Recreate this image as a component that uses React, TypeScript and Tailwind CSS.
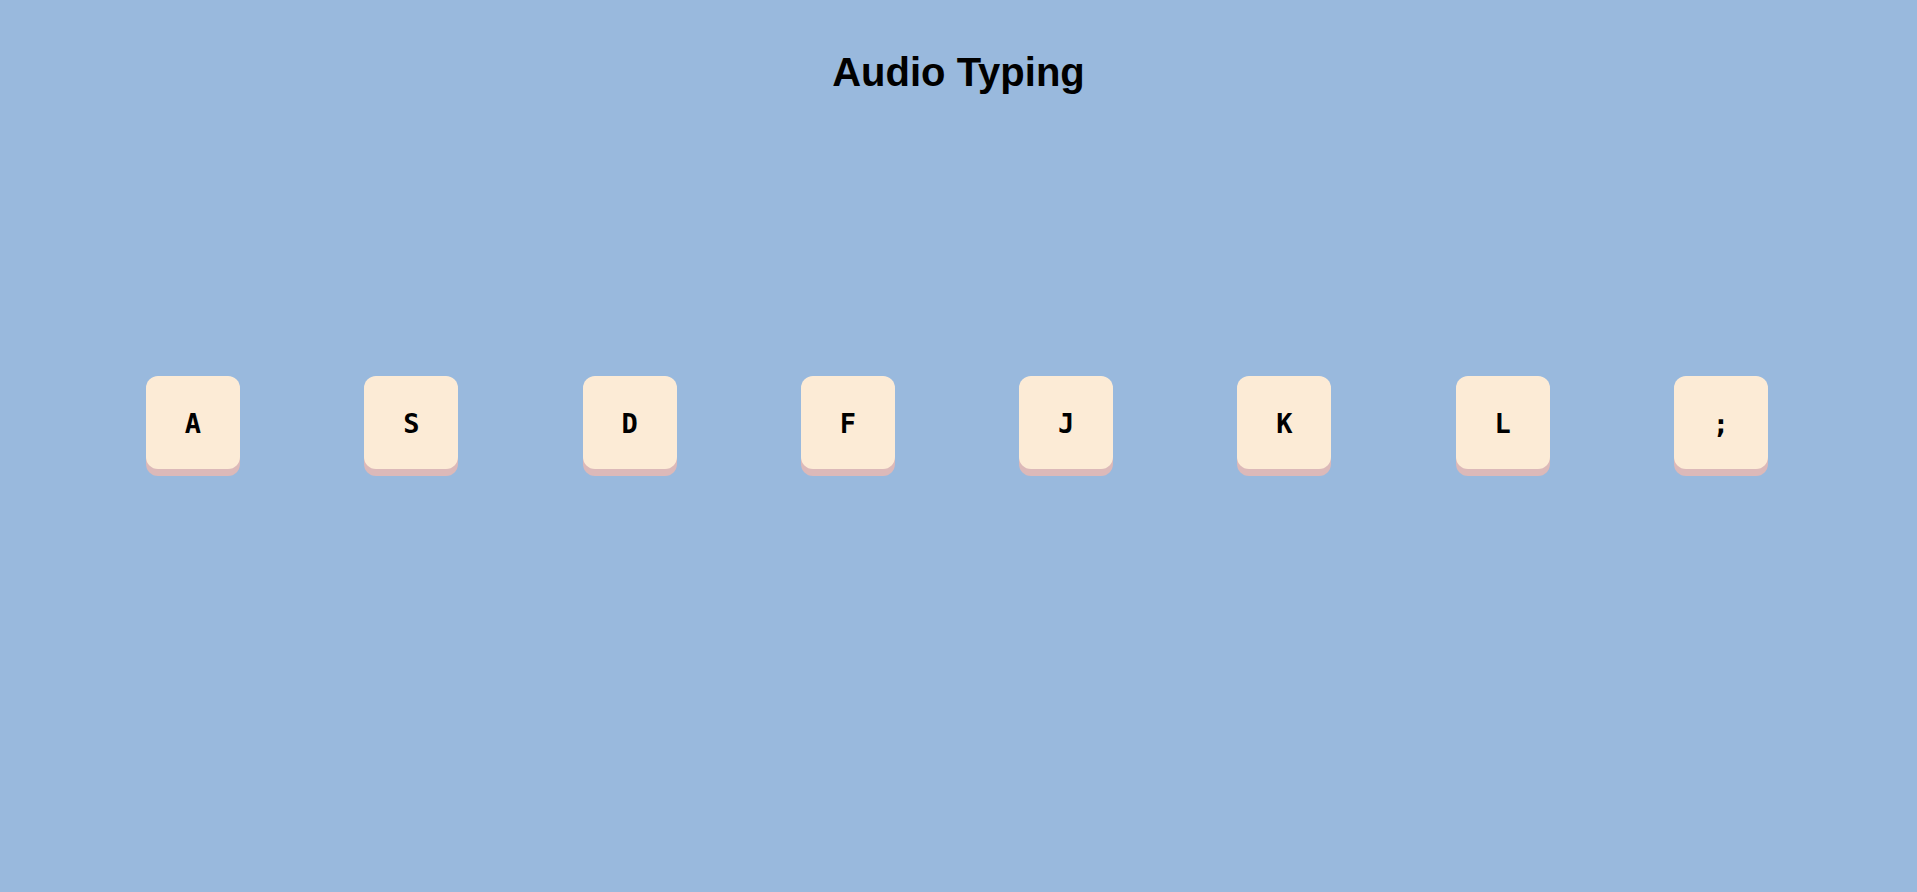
const KEYS = ["A", "S", "D", "F", "J", "K", "L", ";"];

export default function App() {
  return (
    <div className="min-h-screen w-full bg-[#99b9dd] font-['Liberation_Sans',Arial,sans-serif]">
      <h1 className="pt-[48px] text-center text-[40px] font-bold leading-[1.2] text-black">
        Audio Typing
      </h1>

      {/* home row */}
      <div className="mt-[280px] flex justify-between pl-[146px] pr-[149px]">
        {KEYS.map((k) => (
          <Key key={k} label={k} />
        ))}
      </div>
    </div>
  );
}

function Key({ label }: { label: string }) {
  return (
    <div className="flex h-[93px] w-[94px] items-center justify-center rounded-[12px] bg-[#fcebd6] pt-[3px] font-['DejaVu_Sans_Mono',monospace] text-[27px] font-bold text-black shadow-[0_7px_0_#dcb9b9]">
      {label}
    </div>
  );
}
